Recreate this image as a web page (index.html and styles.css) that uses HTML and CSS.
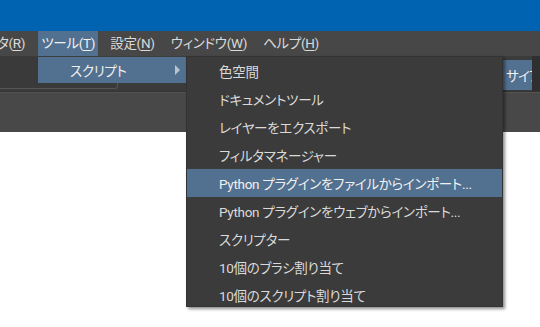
FILE: index.html
```html
<!DOCTYPE html>
<html lang="ja">
<head>
    <meta charset="UTF-8">
    <title>Krita - スクリプト</title>
    <link rel="stylesheet" href="styles.css">
</head>
<body>
    <div class="titlebar"></div>

    <div class="menubar">
        <span class="menu-item cut">タ(<u>R</u>)</span>
        <span class="menu-item active">ツール(<u>T</u>)</span>
        <span class="menu-item">設定(<u>N</u>)</span>
        <span class="menu-item">ウィンドウ(<u>W</u>)</span>
        <span class="menu-item">ヘルプ(<u>H</u>)</span>
    </div>

    <div class="toolbar">
        <div class="tool-field"></div>
        <div class="toolbar-fill"></div>
        <div class="size-btn">サイフ</div>
        <div class="toolbar-end"></div>
    </div>

    <div class="panel-strip"></div>
    <div class="canvas"></div>

    <!-- ツール menu -->
    <div class="popup tools-popup">
        <div class="popup-row selected">
            <span>スクリプト</span>
            <span class="arrow"></span>
        </div>
    </div>

    <!-- スクリプト submenu -->
    <div class="popup script-menu">
        <div class="popup-row">色空間</div>
        <div class="popup-row">ドキュメントツール</div>
        <div class="popup-row">レイヤーをエクスポート</div>
        <div class="popup-row">フィルタマネージャー</div>
        <div class="popup-row selected">Python プラグインをファイルからインポート...</div>
        <div class="popup-row">Python プラグインをウェブからインポート...</div>
        <div class="popup-row">スクリプター</div>
        <div class="popup-row">10個のブラシ割り当て</div>
        <div class="popup-row">10個のスクリプト割り当て</div>
    </div>
</body>
</html>
```

FILE: styles.css
```css
* {
    margin: 0;
    padding: 0;
    box-sizing: border-box;
}

body {
    font-family: Roboto, 'Noto Sans CJK JP', sans-serif;
    font-size: 13.5px;
    letter-spacing: -0.3px;
    font-feature-settings: "palt";
    color: #dadada;
    background: #ffffff;
    width: 540px;
    height: 327px;
    overflow: hidden;
    position: relative;
}

u {
    text-decoration: underline;
    text-underline-offset: 2px;
}

.titlebar {
    height: 31px;
    background: #0063b1;
}

/* Menu bar */
.menubar {
    height: 25px;
    background: #474747;
    display: flex;
    align-items: stretch;
    gap: 8px;
    white-space: nowrap;
}

.menu-item {
    display: flex;
    align-items: center;
    flex-shrink: 0;
    padding: 0 4px;
    line-height: 1;
}

.menu-item.cut {
    margin-left: -7px;
    padding-right: 5px;
}

.menu-item.active {
    padding: 0 3px 0 3px;
    background: #52708f;
    color: #f0f0f0;
}

/* Toolbar */
.toolbar {
    height: 36px;
    background: #3b3b3b;
    display: flex;
    align-items: flex-start;
    border-bottom: 1px solid #333333;
}

.tool-field {
    width: 118px;
    height: 32px;
    margin-top: 1px;
    background: #3a3a3a;
    border: 1px solid #555555;
    border-left: none;
    border-top: none;
    border-radius: 0 0 3px 0;
}

.toolbar-fill {
    flex: 1;
}

.size-btn {
    width: 29px;
    height: 30px;
    margin-top: 4px;
    background: #52708f;
    color: #f2f2f2;
    padding: 5px 0 0 3px;
    letter-spacing: -0.8px;
    white-space: nowrap;
    overflow: hidden;
}

.toolbar-end {
    width: 8px;
    height: 35px;
    background: #2f2f2f;
}

.panel-strip {
    height: 40px;
    background: #484848;
    border-top: 1px solid #545454;
}

.canvas {
    height: 195px;
    background: #ffffff;
}

/* Popup menus */
.popup {
    position: absolute;
    background: #3b3b3b;
}

.popup-row {
    display: flex;
    align-items: center;
    height: 28px;
    padding-left: 33px;
    white-space: nowrap;
}

.popup-row.selected {
    background: #52708f;
    color: #f0f0f0;
}

.tools-popup {
    left: 38px;
    top: 57px;
    width: 148px;
}

.tools-popup .popup-row {
    height: 26px;
    padding-left: 32px;
    justify-content: space-between;
    padding-right: 6px;
}

.arrow {
    width: 0;
    height: 0;
    border-top: 5px solid transparent;
    border-bottom: 5px solid transparent;
    border-left: 5px solid #b8c4d0;
}

.script-menu {
    left: 186px;
    top: 56px;
    width: 317px;
    height: 251px;
    border: 1px solid #333333;
    box-shadow: 2px 2px 3px rgba(0, 0, 0, 0.45);
}

.script-menu .popup-row {
    padding-left: 32px;
}
```
